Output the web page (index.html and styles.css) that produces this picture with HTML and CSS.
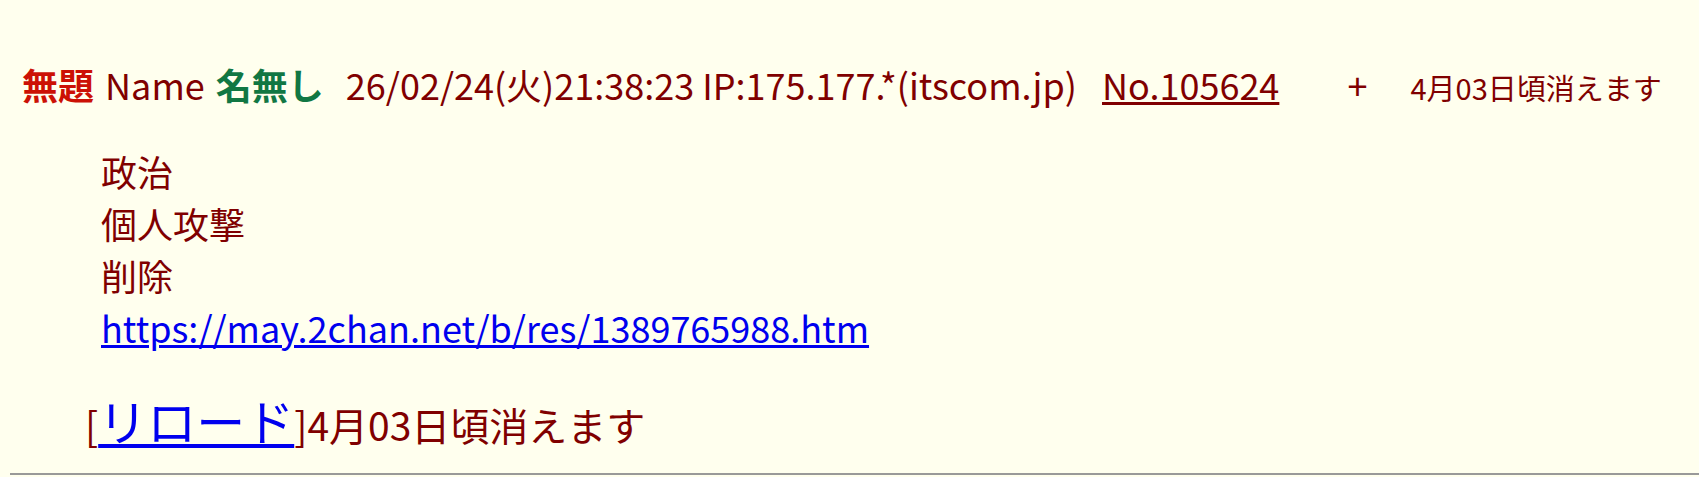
FILE: index.html
```html
<!DOCTYPE html>
<html lang="ja">
<head>
    <meta charset="UTF-8">
    <title>二次元裏@ふたば</title>
    <link rel="stylesheet" href="styles.css">
</head>
<body>
    <div class="thre">
        <div class="thre-head">
            <span class="csb">無題</span>
            <span class="cnh">Name</span>
            <span class="cnm">名無し</span>
            <span class="cnw">26/02/24(火)21:38:23 IP:175.177.*(itscom.jp)</span>
            <span class="cno"><a href="#">No.105624</a></span>
            <a class="del" href="#">+</a>
            <span class="cntd">4月03日頃消えます</span>
        </div>
        <blockquote class="body">
            政治<br>
            個人攻撃<br>
            削除<br>
            <a href="#">https://may.2chan.net/b/res/1389765988.htm</a>
        </blockquote>
    </div>
    <div class="reload">[<a href="#">リロード</a>]4月03日頃消えます</div>
    <hr class="sep">
</body>
</html>
```

FILE: styles.css
```css
body {
    margin: 0;
    padding: 0 0 0 10px;
    background-color: #ffffee;
    color: #800000;
    font-family: "Noto Sans CJK JP", "Noto Sans", sans-serif;
}
a {
    color: #0000ee;
}
.thre-head {
    padding: 58px 0 0 12px;
    font-size: 36px;
    line-height: 52px;
    white-space: nowrap;
}
.csb {
    color: #cc1105;
    font-weight: bold;
}
.cnh {
    margin-left: 3px;
}
.cnm {
    color: #117743;
    font-weight: bold;
    margin-left: 3px;
    margin-right: 14px;
}
.cno {
    margin-left: 17px;
}
.cno a {
    color: #800000;
}
.del {
    color: #800000;
    text-decoration: none;
    margin-left: 60px;
}
.cntd {
    font-size: 29px;
    margin-left: 35px;
}
.body {
    margin: 32px 0 0 91px;
    font-size: 36px;
    line-height: 52px;
}
.reload {
    margin: 37px 0 0 75px;
    height: 60px;
    font-size: 39px;
    line-height: 60px;
}
.reload a {
    font-size: 49px;
}
.sep {
    margin: 23px 0 0;
    border: none;
    border-top: 2px solid #999;
}
```
